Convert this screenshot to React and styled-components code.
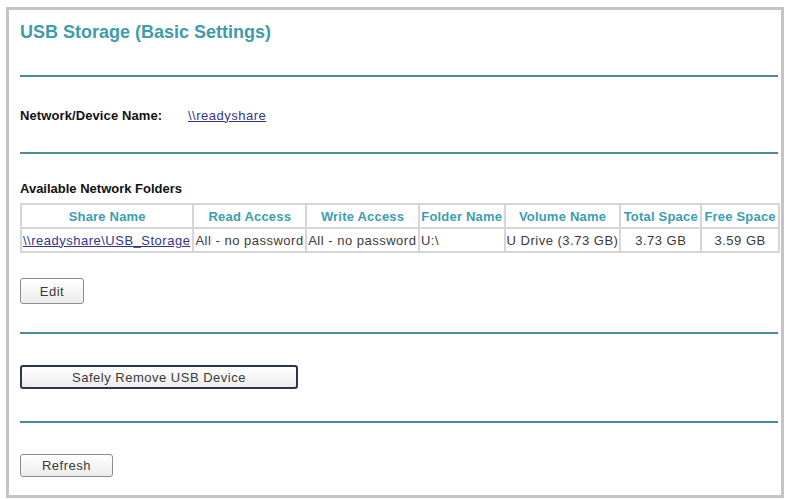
import React from "react";
import styled, { createGlobalStyle } from "styled-components";

const GlobalStyle = createGlobalStyle`
  html, body { margin: 0; padding: 0; background: #ffffff; }
  body { font-family: "Liberation Sans", Arial, sans-serif; }
`;

const Frame = styled.div`
  box-sizing: border-box;
  margin: 7px 0 0 6px;
  width: 778px;
  height: 491px;
  border: 3px solid #c4c4c4;
  background: #fff;
  padding: 0 3px 0 11px;
  display: flex;
  flex-direction: column;
`;

const Title = styled.h1`
  margin: 10px 0 0 0;
  height: 25px;
  line-height: 25px;
  font-size: 18px;
  font-weight: bold;
  color: #3f9ca9;
`;

const Rule = styled.hr`
  margin: ${(p) => p.$top}px 0 0 0;
  border: 0;
  height: 2px;
  background: #4a8a9e;
`;

const Row = styled.div`
  display: flex;
  align-items: center;
  margin-top: ${(p) => p.$top}px;
  height: 16px;
  font-size: 13px;
`;

const Label = styled.span`
  font-weight: bold;
  color: #111;
  width: 168px;
  letter-spacing: 0.1px;
`;

const Link = styled.a`
  color: #35358c;
  text-decoration: underline;
  letter-spacing: 0.5px;
`;

const Caption = styled.div`
  margin-top: ${(p) => p.$top}px;
  font-size: 13px;
  font-weight: bold;
  color: #111;
  height: 16px;
  line-height: 16px;
`;

const Table = styled.table`
  margin-top: 6px;
  width: 760px;
  border-collapse: collapse;
  border: 2px solid #d6d6d6;
  font-size: 13px;
`;

const Th = styled.th`
  height: 22px;
  padding: 0 1px;
  border: 2px solid #d6d6d6;
  color: #3aa0ad;
  font-weight: bold;
  white-space: nowrap;
  text-align: center;
  letter-spacing: 0.2px;
  width: ${(p) => p.$w}px;
`;

const Td = styled.td`
  height: 22px;
  padding: 0 1px;
  border: 2px solid #d6d6d6;
  color: #3a3a3a;
  white-space: nowrap;
  letter-spacing: 0.5px;
  text-align: ${(p) => p.$align || "left"};
`;

const Button = styled.button`
  box-sizing: border-box;
  margin-top: ${(p) => p.$top}px;
  width: ${(p) => p.$w}px;
  height: ${(p) => p.$h}px;
  padding: 0;
  font-family: "Liberation Sans", Arial, sans-serif;
  font-size: 13px;
  letter-spacing: 0.5px;
  color: #3a3a3a;
  background: linear-gradient(#ffffff, #ececec);
  border: 1px solid ${(p) => (p.$focus ? "#2a3550" : "#8c8c8c")};
  border-width: ${(p) => (p.$focus ? "2px" : "1px")};
  border-radius: 3px;
  align-self: flex-start;
  cursor: pointer;
`;

const folders = [
  {
    share: "\\\\readyshare\\USB_Storage",
    read: "All - no password",
    write: "All - no password",
    folder: "U:\\",
    volume: "U Drive (3.73 GB)",
    total: "3.73 GB",
    free: "3.59 GB",
  },
];

export default function App() {
  return (
    <>
      <GlobalStyle />
      <Frame>
        <Title>USB Storage (Basic Settings)</Title>
        <Rule $top={30} />
        <Row $top={30}>
          <Label>Network/Device Name:</Label>
          <Link href="#">\\readyshare</Link>
        </Row>
        <Rule $top={29} />
        <Caption $top={27}>Available Network Folders</Caption>
        <Table>
          <thead>
            <tr>
              <Th $w={169}>Share Name</Th>
              <Th $w={109}>Read Access</Th>
              <Th $w={109}>Write Access</Th>
              <Th $w={82}>Folder Name</Th>
              <Th $w={108}>Volume Name</Th>
              <Th $w={78}>Total Space</Th>
              <Th $w={75}>Free Space</Th>
            </tr>
          </thead>
          <tbody>
            {folders.map((f) => (
              <tr key={f.share}>
                <Td>
                  <Link href="#">{f.share}</Link>
                </Td>
                <Td>{f.read}</Td>
                <Td>{f.write}</Td>
                <Td>{f.folder}</Td>
                <Td>{f.volume}</Td>
                <Td $align="center">{f.total}</Td>
                <Td $align="center">{f.free}</Td>
              </tr>
            ))}
          </tbody>
        </Table>
        <Button $top={25} $w={64} $h={26}>Edit</Button>
        <Rule $top={28} />
        <Button $top={31} $w={278} $h={24} $focus>
          Safely Remove USB Device
        </Button>
        <Rule $top={32} />
        <Button $top={31} $w={93} $h={23}>Refresh</Button>
      </Frame>
    </>
  );
}
